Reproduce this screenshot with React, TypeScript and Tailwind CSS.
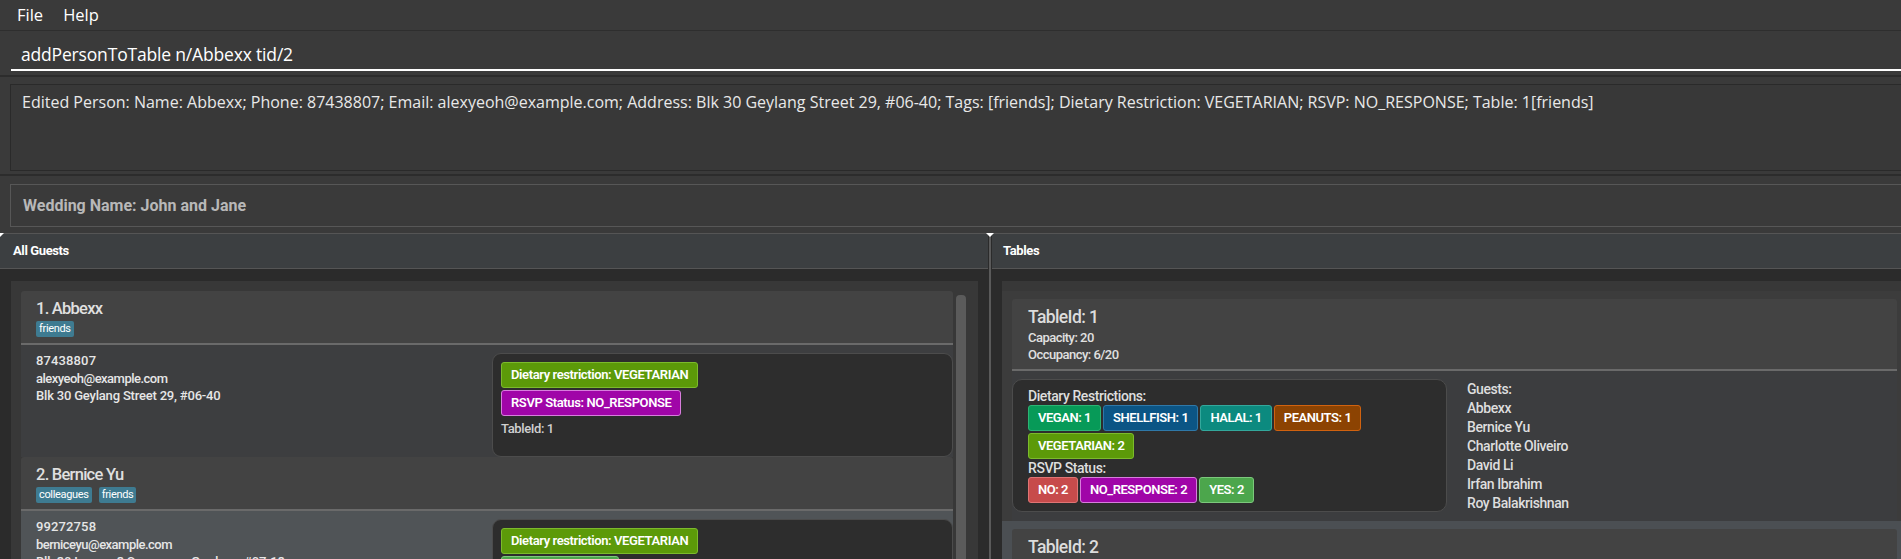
import React from 'react'

const SANS = { fontFamily: 'Roboto, "Liberation Sans", sans-serif' }
const OPEN = { fontFamily: '"Open Sans", "Liberation Sans", sans-serif' }

type Chip = { label: string; cls: string }

const TAG_CLS = 'bg-[#3e7b91] text-white text-[11px] leading-[16px] px-[3px] rounded-[2px] tracking-[-0.03em]'

const guests = [
  {
    idx: 1,
    name: 'Abbexx',
    tags: ['friends'],
    phone: '87438807',
    email: 'alexyeoh@example.com',
    address: 'Blk 30 Geylang Street 29, #06-40',
    rsvp: { label: 'RSVP Status: NO_RESPONSE', cls: 'bg-[#a005a8] border-[#d77ddc]' },
    table: 'TableId: 1',
    rowBg: 'bg-[#3d3e40]',
  },
  {
    idx: 2,
    name: 'Bernice Yu',
    tags: ['colleagues', 'friends'],
    phone: '99272758',
    email: 'berniceyu@example.com',
    address: 'Blk 30 Lorong 3 Serangoon Gardens, #07-18',
    rsvp: { label: 'RSVP Status: YES', cls: 'bg-[#4ca64c] border-[#7cc87c]' },
    table: 'TableId: 1',
    rowBg: 'bg-[#505457]',
  },
]

const dietary: Chip[] = [
  { label: 'VEGAN: 1', cls: 'bg-[#079a58] border-[#2cb474]' },
  { label: 'SHELLFISH: 1', cls: 'bg-[#0b5585] border-[#2f78a8]' },
  { label: 'HALAL: 1', cls: 'bg-[#0c8a7f] border-[#33a89c]' },
  { label: 'PEANUTS: 1', cls: 'bg-[#8c4302] border-[#d0620f]' },
  { label: 'VEGETARIAN: 2', cls: 'bg-[#5c9a09] border-[#7cbb2c]' },
]

const rsvp: Chip[] = [
  { label: 'NO: 2', cls: 'bg-[#c74b4b] border-[#e07474]' },
  { label: 'NO_RESPONSE: 2', cls: 'bg-[#a005a8] border-[#d77ddc]' },
  { label: 'YES: 2', cls: 'bg-[#4ca64c] border-[#7cc87c]' },
]

const tableGuests = ['Abbexx', 'Bernice Yu', 'Charlotte Oliveiro', 'David Li', 'Irfan Ibrahim', 'Roy Balakrishnan']

function Badge({ chip, tight }: { chip: Chip; tight?: boolean }) {
  return (
    <span
      className={`${chip.cls} border text-white text-[13px] font-semibold h-[26px] rounded-[3px] inline-flex items-center ${
        tight ? 'px-[9px] tracking-[-0.035em]' : 'px-[9px] tracking-[-0.03em]'
      }`}
    >
      {chip.label}
    </span>
  )
}

function GuestCard({ g }: { g: (typeof guests)[number] }) {
  return (
    <div className="flex flex-col shrink-0">
      <div className="bg-[#434343] h-[54px] pl-[15px] pt-[7px] border-b-2 border-[#6a6a6a] rounded-t-[3px]">
        <div className="text-[16.5px] leading-[22px] text-[#e0e0e0] font-medium tracking-[-0.045em]">
          {g.idx}. {g.name}
        </div>
        <div className="flex gap-[7px] mt-[1px]">
          {g.tags.map((t) => (
            <span key={t} className={TAG_CLS}>{t}</span>
          ))}
        </div>
      </div>
      <div className={`${g.rowBg} h-[112px] flex`}>
        <div className="flex-1 pl-[15px] pt-[7px] text-[13px] leading-[17.5px] text-[#e6e6e6] font-medium tracking-[-0.04em]">
          <div className="tracking-[0.01em]">{g.phone}</div>
          <div>{g.email}</div>
          <div className="tracking-[-0.015em]">{g.address}</div>
        </div>
        <div className="w-[461px] mt-[8px] bg-[#2d2d2d] border border-[#4c4c4c] rounded-[9px] px-[8px] pt-[8px] flex flex-col items-start gap-[2px]">
          <Badge chip={{ label: 'Dietary restriction: VEGETARIAN', cls: 'bg-[#5c9a09] border-[#7cbb2c]' }} />
          <Badge chip={g.rsvp} />
          <div className="text-[13px] text-[#d0d0d0] font-medium tracking-[-0.03em] mt-[1px]">{g.table}</div>
        </div>
      </div>
    </div>
  )
}

function TableCard({ id, cap, occ, bg }: { id: number; cap: number; occ: string; bg: string }) {
  return (
    <div className={`${bg} pt-[8px] pl-[10px] pr-[4px] shrink-0`}>
      <div className="bg-[#434343] h-[72px] pl-[16px] pt-[6px] border-b-2 border-[#6a6a6a] rounded-t-[3px]">
        <div className="text-[17.5px] leading-[24px] text-[#dcdcdc] font-medium tracking-[-0.035em]">TableId: {id}</div>
        <div className="text-[13px] leading-[17px] text-[#e0e0e0] font-medium tracking-[-0.04em]">Capacity: {cap}</div>
        <div className="text-[13px] leading-[17px] text-[#e0e0e0] font-medium tracking-[-0.04em]">Occupancy: {occ}</div>
      </div>
      <div className="bg-[#3c3d3f] h-[150px] flex pt-[8px]">
        <div className="w-[435px] h-[133px] bg-[#2d2d2d] border border-[#4c4c4c] rounded-[10px] pl-[15px] pt-[7px]">
          <div className="text-[14px] leading-[18px] text-[#dedede] font-medium tracking-[-0.03em]">Dietary Restrictions:</div>
          <div className="flex flex-wrap gap-[2px] w-[345px]">
            {dietary.map((c) => (
              <Badge key={c.label} chip={c} tight />
            ))}
          </div>
          <div className="text-[14px] leading-[18px] text-[#dedede] font-medium tracking-[-0.03em]">RSVP Status:</div>
          <div className="flex gap-[2px]">
            {rsvp.map((c) => (
              <Badge key={c.label} chip={c} tight />
            ))}
          </div>
        </div>
        <div className="pl-[20px] pt-[1px] text-[14px] leading-[19px] text-[#dedede] font-medium tracking-[-0.03em]">
          <div>Guests:</div>
          {tableGuests.map((n) => (
            <div key={n}>{n}</div>
          ))}
        </div>
      </div>
    </div>
  )
}

export default function App() {
  return (
    <div style={SANS} className="w-[1901px] h-[559px] overflow-hidden bg-[#3a3a3a] flex flex-col">
      {/* menu */}
      <div style={OPEN} className="h-[31px] shrink-0 flex items-center gap-[20px] pl-[17px] text-[16.5px] text-white border-b border-[#2e2e2e]">
        <span>File</span>
        <span>Help</span>
      </div>

      {/* command box */}
      <div className="h-[46px] shrink-0 pl-[11px] pt-[8px] border-b-2 border-[#2c2c2c]">
        <div style={OPEN} className="h-[32px] border-b-2 border-white pl-[10px] flex items-center text-[17.5px] text-white tracking-[-0.01em]">
          addPersonToTable n/Abbexx tid/2
        </div>
      </div>

      {/* result */}
      <div className="h-[99px] shrink-0 pl-[10px] pt-[7px] border-b-2 border-[#2c2c2c]">
        <div style={OPEN} className="h-[87px] bg-[#383838] border-l border-y border-[#2a2a2a] pl-[11px] pt-[8px] text-[16px] leading-[18px] text-[#e8e8e8] whitespace-nowrap">
          Edited Person: Name: Abbexx; Phone: 87438807; Email: alexyeoh@example.com; Address: Blk 30 Geylang Street 29, #06-40; Tags: [friends]; Dietary Restriction: VEGETARIAN; RSVP: NO_RESPONSE; Table: 1[friends]
        </div>
      </div>

      {/* wedding name */}
      <div className="h-[57px] shrink-0 pl-[10px] pt-[8px]">
        <div className="h-[43px] border-l border-y border-[#575757] pl-[12px] flex items-center text-[16px] font-bold text-[#b8b8b8]">
          Wedding Name: John and Jane
        </div>
      </div>

      {/* split */}
      <div className="flex-1 min-h-0 flex relative">
        {/* left */}
        <div className="w-[988px] flex flex-col">
          <div className="h-[36px] shrink-0 bg-[#3c3f41] border-y border-[#555] pl-[13px] flex items-center text-[13px] font-bold text-white tracking-[-0.03em]">
            All Guests
          </div>
          <div className="flex-1 min-h-0 bg-[#2b2b2b] pl-[11px] pr-[10px] pt-[12px]">
            <div className="h-full bg-[#383838] pl-[10px] pt-[10px] flex overflow-hidden">
              <div className="w-[932px] flex flex-col">
                {guests.map((g) => (
                  <GuestCard key={g.idx} g={g} />
                ))}
              </div>
              <div className="ml-[3px] mt-[4px] w-[10px] h-[400px] bg-[#5b5b5b] rounded-[4px]" />
            </div>
          </div>
        </div>

        {/* divider */}
        <div className="w-[4px] bg-[#2b2b2b] flex justify-center">
          <div className="w-[2px] bg-[#5a5a5a]" />
        </div>

        {/* right */}
        <div className="flex-1 flex flex-col">
          <div className="h-[36px] shrink-0 bg-[#3c3f41] border-y border-[#555] pl-[11px] flex items-center text-[13px] font-bold text-white tracking-[-0.03em]">
            Tables
          </div>
          <div className="flex-1 min-h-0 bg-[#2b2b2b] pl-[10px] pt-[12px]">
            <div className="h-full bg-[#383838] pt-[10px] flex flex-col overflow-hidden">
              <TableCard id={1} cap={20} occ="6/20" bg="bg-[#3c3c3c]" />
              <TableCard id={2} cap={10} occ="0/10" bg="bg-[#4b4f53]" />
            </div>
          </div>
        </div>

        {/* divider grips */}
        <div className="absolute left-[986px] top-[0px] w-0 h-0 border-l-[4px] border-r-[4px] border-t-[4px] border-l-transparent border-r-transparent border-t-white" />
        <div className="absolute left-[0px] top-[0px] w-0 h-0 border-r-[4px] border-t-[4px] border-r-transparent border-t-white" />
      </div>
    </div>
  )
}
